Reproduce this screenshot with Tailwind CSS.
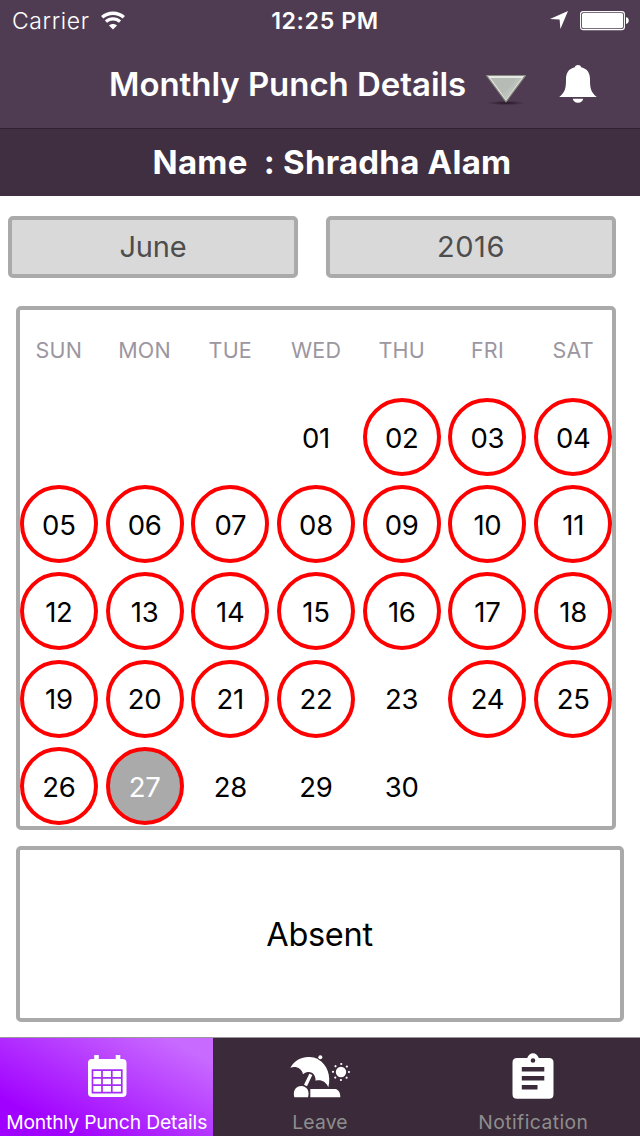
<!DOCTYPE html>
<html lang="en">
<head>
<meta charset="utf-8">
<title>Monthly Punch Details</title>
<script src="https://cdn.jsdelivr.net/npm/@tailwindcss/browser@4"></script>
</head>
<body class="flex h-[1136px] w-[640px] flex-col overflow-hidden bg-white font-['Inter','Liberation_Sans',sans-serif] text-black">

<header class="flex h-[129px] shrink-0 flex-col border-b border-[#2f2130] bg-[#503c52] text-white">
  <!-- Status bar -->
  <div class="grid h-10 grid-cols-[1fr_auto_1fr] items-center pl-3 pr-[11px]">
    <div class="flex items-center gap-[11px]">
      <span class="pt-0.5 text-[23px] font-light leading-[38px] tracking-[0.6px]">Carrier</span>
      <svg class="h-[19px] w-6" viewBox="0 0 24 19" fill="none" stroke="#fff">
        <path d="M1.2 6.3C7.2 .8 16.8 .8 22.8 6.3" stroke-width="3.4"/>
        <path d="M5 10.6C9 6.9 15 6.9 19 10.6" stroke-width="3.2"/>
        <path d="M12 18.4L8 14.4C10.3 12.4 13.7 12.4 16 14.4Z" fill="#fff" stroke="none"/>
      </svg>
    </div>
    <span class="pl-[9px] pt-0.5 text-[23.2px] font-semibold leading-[38px] tracking-[0.6px]">12:25 PM</span>
    <div class="flex items-center justify-end gap-3">
      <svg class="h-[18px] w-[18px]" viewBox="0 0 18 18" fill="#fff"><path d="M18 0L10.4 18L9.6 8.6L0 8Z"/></svg>
      <svg class="mt-px h-5 w-[49px]" viewBox="0 0 49 20">
        <rect x=".6" y=".6" width="43.8" height="18" rx="2.6" fill="none" stroke="#fff" stroke-width="1.1"/>
        <rect x="2" y="2" width="41" height="15.2" rx="1.6" fill="#fff"/>
        <path d="M46 6.2C49.7 6.2 49.7 13 46 13Z" fill="#fff"/>
      </svg>
    </div>
  </div>
  <!-- Navigation bar -->
  <div class="flex h-[88px] items-center pl-[109px]">
    <h1 class="w-[377px] whitespace-nowrap text-[33px] font-semibold leading-[88px] tracking-[-0.05px]">Monthly Punch Details</h1>
    <svg class="mt-[9px] h-9 w-10" viewBox="0 0 40 36">
      <defs>
        <linearGradient id="tri" x1="0" y1="0" x2="1" y2="1"><stop offset="0" stop-color="#a9aea7"/><stop offset="1" stop-color="#d3d7d1"/></linearGradient>
        <radialGradient id="shade"><stop offset="0" stop-color="#241525"/><stop offset="1" stop-color="#241525" stop-opacity="0"/></radialGradient>
      </defs>
      <ellipse cx="20" cy="32" rx="19" ry="2.2" fill="url(#shade)"/>
      <path d="M.6 4.500H39.400L20 30.800Z" fill="#e6e8e3" stroke="#878b80" stroke-width="1.2"/>
      <path d="M4.500 7H35.500L20 28.200Z" fill="#b7bbb5"/>
      <path d="M35.500 7L20 28.200L16 22.700L21 19L26 15L30 7Z" fill="url(#tri)"/>
    </svg>
    <svg class="ml-[33px] h-10 w-[38px]" viewBox="0 0 38 40" fill="#fff">
      <path d="M19 1C21 1 22 2 22.2 3.3C28.5 4.7 31 9.5 31 15C31 24 31.6 28 37.8 33H.2C6.4 28 7 24 7 15C7 9.5 9.5 4.7 15.8 3.3C16 2 17 1 19 1Z"/>
      <path d="M13.8 34.800H24.200C24 37 22 38.800 19 38.800C16 38.800 14 37 13.800 34.800Z"/>
    </svg>
  </div>
</header>

<section class="flex h-[67px] shrink-0 items-center justify-center bg-[#402f40] pl-6 text-white">
  <h2 class="whitespace-pre text-[33px] font-bold leading-[67px] tracking-[0.24px]">Name  : Shradha Alam</h2>
</section>

<main class="flex h-[841px] shrink-0 flex-col">
  <!-- Month and year pickers -->
  <div class="mt-5 flex gap-7 pl-2 text-[#4d4d4d]">
    <button class="h-[62px] w-[290px] rounded-[5px] border-4 border-[#aaa] bg-[#d9d9d9] text-[29px] tracking-[-0.2px]">June</button>
    <button class="h-[62px] w-[290px] rounded-[5px] border-4 border-[#aaa] bg-[#d9d9d9] text-[29px] tracking-[0.6px]">2016</button>
  </div>

  <!-- Calendar -->
  <div class="ml-4 mt-7 h-[524px] w-[600px] rounded-[5px] border-4 border-[#aaa]">
    <div class="-mx-1 grid h-[83px] grid-cols-7 items-center pb-0.5 text-center text-[21.5px] tracking-[0.2px] text-[#9c96a0]">
      <span>SUN</span><span>MON</span><span>TUE</span><span>WED</span><span>THU</span><span>FRI</span><span>SAT</span>
    </div>
    <div id="days" class="-mx-1 grid grid-cols-7 text-[27.5px] tracking-[-0.3px]"></div>
  </div>

  <!-- Status of the selected day -->
  <div class="ml-4 mt-4 flex h-[176px] w-[608px] items-center justify-center rounded-[5px] border-4 border-[#aaa] pr-px pt-[3px] text-[32.5px] tracking-[-0.3px]">Absent</div>
</main>

<!-- Tab bar -->
<nav class="grid h-[99px] shrink-0 grid-cols-3 border-t border-[#9d959c] bg-[#3b2a39] text-[19.3px] text-[#8e8e8e]">
  <div class="flex flex-col items-center bg-[linear-gradient(28deg,#a000ff_18%,#c869ff_88%)] text-white">
    <svg class="mt-4 h-11 w-10" viewBox="0 0 40 44">
      <rect x="1" y="5" width="38.5" height="38" rx="4" fill="#fff"/>
      <rect x="7.2" y="1" width="4.6" height="8" fill="#fff"/><rect x="28.7" y="1" width="4.6" height="8" fill="#fff"/>
      <path d="M5.5 16.2H34.8V38.6H5.5ZM15 16V39M24.8 16V39M5 23.8H35M5 31.2H35" fill="none" stroke="#a52df5" stroke-width="1.7"/>
    </svg>
    <span class="mt-[9px] whitespace-nowrap leading-[30px] tracking-[-0.14px]">Monthly Punch Details</span>
  </div>
  <div class="flex flex-col items-center">
    <svg class="mt-[7px] h-[60px] w-[70px]" viewBox="0 0 210 180" fill="#fff">
      <path d="M16 68C32 42 56 33 80 37C90 38 97 41 101 44C126 58 139 92 130 127C124 110 107 102 92 107C92 94 85 82 75 82C68 79 59 82 54 88C51 70 33 62 16 68Z"/>
      <circle cx="106" cy="37" r="6"/>
      <path d="M73 86L82 90L66 124L57 119Z"/>
      <path d="M28 157C22 136 34 123 49 123C65 123 75 138 69 157Z"/>
      <path d="M76 132H151C161 134 166 143 166 157H76Z"/>
      <circle cx="168" cy="81" r="15.5"/>
      <circle cx="168" cy="81" r="24" fill="none" stroke="#fff" stroke-width="6.5" stroke-linecap="round" stroke-dasharray="0.1 18.75"/>
    </svg>
    <span class="mt-0.5 leading-[30px] tracking-[0.2px]">Leave</span>
  </div>
  <div class="flex flex-col items-center">
    <svg class="mt-[14px] h-[48px] w-[42px]" viewBox="0 0 42 48">
      <path fill="#fff" fill-rule="evenodd" d="M5 6H15.200C16.400 3 18.500 1.200 21 1.200C23.500 1.200 25.600 3 26.800 6H37Q41.500 6 41.500 10.500V42.300Q41.500 46.800 37 46.800H5Q.5 46.800 .5 42.300V10.500Q.5 6 5 6ZM21 6.200A2.300 2.300 0 1 0 21 10.800A2.300 2.300 0 1 0 21 6.200ZM9.800 15H32.300V19.500H9.800ZM9.800 24H32.300V28.500H9.800ZM9.800 33H25.500V37.500H9.800Z"/>
    </svg>
    <span class="mt-[7px] leading-[30px] tracking-[0.45px]">Notification</span>
  </div>
</nav>

<script>
  // June 2016 starts on a Wednesday; the days below carry no red ring.
  const plain = [1, 23, 28, 29, 30], selected = 27;
  let cells = '<i></i><i></i><i></i>';
  for (let d = 1; d <= 30; d++) {
    const ring = plain.includes(d) ? 'border-transparent' : 'border-[#f00]';
    const fill = d === selected ? 'bg-[#aaa] text-white' : '';
    cells += `<div class="flex h-[87.3px] items-center justify-center"><span class="flex size-[78px] items-center justify-center rounded-full border-4 pt-[3px] ${ring} ${fill}">${String(d).padStart(2, '0')}</span></div>`;
  }
  document.getElementById('days').innerHTML = cells;
</script>
</body>
</html>
